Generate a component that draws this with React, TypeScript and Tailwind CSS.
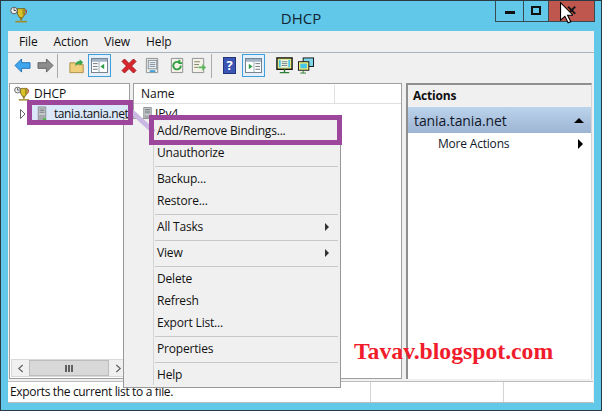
import React from "react";

const font = { fontFamily: '"Open Sans", "Noto Sans", sans-serif' };

function Trophy({ className }: { className?: string }) {
  return (
    <svg viewBox="0 0 16 16" className={className}>
      <path d="M7 2h7v5l-2 3.500H9L7 7z" fill="#d9c22a" stroke="#6d5a10" strokeWidth=".8" />
      <path d="M11.500 2.500H14V7l-2 3z" fill="#a8921c" />
      <path d="M14 3.500h1.500V6L13.500 8" fill="none" stroke="#c0392b" strokeWidth=".9" />
      <circle cx="3.800" cy="3.800" r="3.100" fill="#eeeeee" stroke="#555" strokeWidth=".9" />
      <path d="M3.800 1.800v2h2" fill="none" stroke="#333" strokeWidth=".8" />
      <path d="M9.500 10.500h2V13h-2z" fill="#8a7420" />
      <path d="M5 13.500h11v1.500H5z" fill="#a08a24" />
    </svg>
  );
}

function Server({ className }: { className?: string }) {
  return (
    <svg viewBox="0 0 12 18" className={className}>
      <path d="M1.500.5h9v17h-9z" fill="#c9cdd0" stroke="#7d8286" />
      <path d="M3 3h6M3 5h6M3 7h6" stroke="#6f7478" />
      <rect x="2.500" y="10" width="7" height="7" fill="#a4a8ab" />
      <rect x="7.500" y="14" width="3" height="3" fill="#3dc13d" />
    </svg>
  );
}

function Arrow({ dir, color, edge }: { dir: "l" | "r"; color: string; edge: string }) {
  return (
    <svg viewBox="0 0 18 16" className="w-[17px] h-[15px] shrink-0">
      <path
        d={dir === "l" ? "M1 8 8 1v4h9v6H8v4z" : "M17 8 10 1v4H1v6h9v4z"}
        fill={color}
        stroke={edge}
      />
    </svg>
  );
}

function PaneIcon({ flip }: { flip?: boolean }) {
  return (
    <svg viewBox="0 0 18 16" className="w-[17px] h-[15px]">
      <rect x=".5" y=".5" width="17" height="15" fill="#fff" stroke="#6f7b85" />
      <rect x="1" y="1" width="16" height="3" fill="#9fb4c6" />
      {flip ? (
        <>
          <path d="M4 6v6l4-3z" fill="#2f9e44" />
          <path d="M11 6h5M11 9h5M11 12h5" stroke="#66707a" />
          <path d="M9.500 4v11" stroke="#99aaaa" />
        </>
      ) : (
        <>
          <path d="M2 6h5M2 9h5M2 12h5" stroke="#66707a" />
          <path d="M8.500 4v11" stroke="#99aaaa" />
          <path d="M14 6v6l-4-3z" fill="#2f9e44" />
        </>
      )}
    </svg>
  );
}

function PageIcon({ accent, kind }: { accent: string; kind: "lines" | "refresh" | "export" }) {
  return (
    <svg viewBox="0 0 18 18" className="w-[17px] h-[17px] shrink-0">
      <path d="M2.500 1.500h12v15h-12z" fill="#f4f1e6" stroke="#8b8f93" />
      {kind === "lines" && (
        <>
          <rect x="4.500" y="3.500" width="9" height="9" fill="#eef2f6" stroke="#7f8d9b" />
          <path d="M6 6h6M6 8h6M6 10h6" stroke="#7f8d9b" />
          <rect x="6" y="14" width="6" height="2" fill={accent} />
        </>
      )}
      {kind === "refresh" && (
        <path d="M12.500 9a4 4 0 1 1-1.500-3M11 3v3.500H14" fill="none" stroke={accent} strokeWidth="2" />
      )}
      {kind === "export" && (
        <>
          <path d="M4.500 5h6M4.500 8h5M4.500 11h4" stroke="#7f7f60" />
          <path d="M9 10h4V7.500l4 3.500-4 3.500V12H9z" fill={accent} />
        </>
      )}
    </svg>
  );
}

function Monitor({ className }: { className?: string }) {
  return (
    <svg viewBox="0 0 18 18" className={className}>
      <rect x="1" y="1" width="16" height="12" fill="#f3ee78" stroke="#111" strokeWidth="1.500" />
      <rect x="3" y="3" width="12" height="8" fill="#48c6e8" />
      <rect x="5" y="3" width="8" height="8" fill="#f6f6e0" />
      <path d="M6 5h6M6 7h6M6 9h6" stroke="#6a8792" />
      <path d="M9 13v3M4 16.500h10" stroke="#2e7d32" strokeWidth="1.500" />
    </svg>
  );
}

function Toolbar() {
  const Sep = () => <div className="w-px h-[24px] bg-[#a9a9a9] shrink-0" />;
  const Active = ({ children }: { children: React.ReactNode }) => (
    <div className="w-[23px] h-[23px] border border-[#3f9fdc] bg-[#e4f1fb] flex items-center justify-center shrink-0">
      {children}
    </div>
  );
  return (
    <div className="h-[30px] flex items-center pl-[6px] pb-[5px] bg-[#f0f0f0]">
      <Arrow dir="l" color="#3fa7ee" edge="#1e6fb5" />
      <div className="w-[6px]" />
      <Arrow dir="r" color="#8d8d8d" edge="#5f5f5f" />
      <div className="w-[3px]" />
      <Sep />
      <div className="w-[11px]" />
      <svg viewBox="0 0 18 18" className="w-[16px] h-[17px]">
        <path d="M1 6h6l1 2h8v9H1z" fill="#f0cf7c" stroke="#a78a3d" />
        <path d="M7 10c0-4 2-6 5-6V2l4 3.500L12 9V7c-2 0-4 1-5 3z" fill="#36a447" />
      </svg>
      <div className="w-[3px]" />
      <Active>
        <PaneIcon />
      </Active>
      <div className="w-[9px]" />
      <svg viewBox="0 0 18 18" className="w-[18px] h-[18px]">
        <path d="M2 4.500 4.500 2 9 6.500 13.500 2 16 4.500 11.500 9 16 13.500 13.500 16 9 11.500 4.500 16 2 13.500 6.500 9z" fill="#d8262c" stroke="#a41c20" />
      </svg>
      <div className="w-[6px]" />
      <PageIcon accent="#3f9fdc" kind="lines" />
      <div className="w-[8px]" />
      <PageIcon accent="#2f9e44" kind="refresh" />
      <div className="w-[4px]" />
      <PageIcon accent="#5cb85c" kind="export" />
      <div className="w-[4px]" />
      <Sep />
      <div className="w-[11px]" />
      <div className="w-[13px] h-[17px] bg-[#3a55b4] border border-[#22347c] text-white text-[13px] font-bold flex items-center justify-center leading-none">
        ?
      </div>
      <div className="w-[6px]" />
      <Active>
        <PaneIcon flip />
      </Active>
      <div className="w-[11px]" />
      <Monitor className="w-[17px] h-[17px]" />
      <div className="w-[4px]" />
      <svg viewBox="0 0 18 18" className="w-[18px] h-[17px]">
        <rect x="6" y="1" width="11" height="9" fill="#7fd6ea" stroke="#111" />
        <rect x="1" y="5" width="11" height="9" fill="#f3ee78" stroke="#111" />
        <rect x="3" y="7" width="7" height="5" fill="#48c6e8" />
        <path d="M6 14v3M3 17h6" stroke="#2e7d32" />
      </svg>
    </div>
  );
}

function TreePane() {
  return (
    <div className="w-[121px] bg-white border border-[#a0a0a0] flex flex-col ml-px">
      <div className="h-[20px] flex items-center pl-[4px] gap-[5px] shrink-0">
        <Trophy className="w-[15px] h-[16px] shrink-0" />
        <span className="text-[12px] text-[#101010]">DHCP</span>
      </div>
      <div className="h-[19px] flex items-center pl-[10px] shrink-0">
        <svg viewBox="0 0 6 10" className="w-[6px] h-[10px] shrink-0">
          <path d="M.5.5 5 5 .5 9.500z" fill="#fff" stroke="#666" />
        </svg>
        <div className="ml-[6px] flex-1 min-w-0 h-[19px] bg-[#dbe8f9] flex items-center pl-[5px] gap-[7px]">
          <Server className="w-[10px] h-[18px] shrink-0" />
          <span className="text-[12px] tracking-[-0.42px] text-[#101010] whitespace-nowrap">tania.tania.net</span>
        </div>
      </div>
      <div className="flex-1" />
      <div className="h-[18px] mx-px mb-px flex items-center bg-[#f0f0f0] border border-[#d9d9d9] text-[#606060]">
        <div className="w-[17px] flex justify-center shrink-0">
          <svg viewBox="0 0 8 10" className="w-[7px] h-[9px]">
            <path d="M6.500 1 2 5l4.500 4" fill="none" stroke="#606060" strokeWidth="1.300" />
          </svg>
        </div>
        <div className="w-[80px] h-full bg-[#d8d8d8] border border-[#bcbcbc] flex items-center justify-center gap-px shrink-0">
          <div className="w-[2px] h-[7px] bg-[#606060]" />
          <div className="w-[2px] h-[7px] bg-[#606060]" />
          <div className="w-[2px] h-[7px] bg-[#606060]" />
        </div>
        <div className="flex-1 flex justify-center">
          <svg viewBox="0 0 8 10" className="w-[7px] h-[9px]">
            <path d="M1.500 1 6 5 1.500 9" fill="none" stroke="#606060" strokeWidth="1.300" />
          </svg>
        </div>
      </div>
    </div>
  );
}

function ListPane() {
  return (
    <div className="ml-[3px] w-[269px] bg-white border border-[#a0a0a0] flex flex-col">
      <div className="h-[20px] flex items-center border-b border-[#e0e0e0]">
        <div className="w-[201px] pl-[7px] text-[12px] text-[#101010] border-r border-[#e0e0e0]">Name</div>
      </div>
      <div className="h-[20px] flex items-center pl-[8px] gap-[2px]">
        <Server className="w-[11px] h-[15px]" />
        <span className="text-[12px] text-[#101010]">IPv4</span>
      </div>
    </div>
  );
}

function ActionsPane() {
  return (
    <div className="ml-[4px] w-[186px] bg-white border-l-2 border-t-2 border-[#8f8f8f] border-r border-r-[#d4d4d4] flex flex-col">
      <div className="h-[22px] bg-[#f0f0f0] flex items-center pl-[5px] text-[12px] tracking-[-0.2px] font-bold text-[#101010]">
        Actions
      </div>
      <div className="h-[26px] flex items-center justify-between pl-[6px] pr-[7px] bg-gradient-to-b from-[#bcd3ec] to-[#9db5d4] text-[14px] tracking-[-0.1px] text-[#10182a]">
        <span>tania.tania.net</span>
        <div className="w-0 h-0 border-x-[5px] border-x-transparent border-b-[5px] border-b-black" />
      </div>
      <div className="h-[22px] flex items-center justify-between pl-[30px] pr-[8px] text-[12px] tracking-[-0.2px] text-[#10182a]">
        <span>More Actions</span>
        <div className="w-0 h-0 border-y-[5px] border-y-transparent border-l-[5px] border-l-black" />
      </div>
    </div>
  );
}

function StatusBar() {
  return (
    <div className="h-[22px] mt-[2px] mr-px bg-white border-y border-[#bdbdbd] flex text-[12px] text-[#101010]">
      <div className="w-[363px] pl-[2px] flex items-center border-r border-[#d4d4d4] whitespace-nowrap tracking-[-0.34px]">
        Exports the current list to a file.
      </div>
      <div className="w-[133px] border-r border-[#d4d4d4]" />
      <div className="flex-1" />
    </div>
  );
}

const menuGroups: { label: string; sub?: boolean }[][] = [
  [{ label: "Add/Remove Bindings..." }, { label: "Unauthorize" }],
  [{ label: "Backup..." }, { label: "Restore..." }],
  [{ label: "All Tasks", sub: true }],
  [{ label: "View", sub: true }],
  [{ label: "Delete" }, { label: "Refresh" }, { label: "Export List..." }],
  [{ label: "Properties" }],
  [{ label: "Help" }],
];

function ContextMenu() {
  return (
    <div className="absolute left-[122px] top-[117px] w-[218px] bg-[#f0f0f0] border border-[#979797] p-px">
      <div className="absolute left-[29px] top-0 bottom-[2px] w-px bg-[#d4d4d4]" />
      {menuGroups.map((group, i) => (
        <div key={i}>
          {i > 0 && (
            <div className="h-[4px] flex items-center pl-[30px] pr-[1px]">
              <div className="h-px w-full bg-[#c8c8c8]" />
            </div>
          )}
          {group.map((item) => (
            <div
              key={item.label}
              className="h-[22px] flex items-center justify-between pl-[32px] pr-[10px] text-[12px] tracking-[-0.18px] text-[#101010]"
            >
              <span>{item.label}</span>
              {item.sub && <div className="w-0 h-0 border-y-[4px] border-y-transparent border-l-[4px] border-l-[#333]" />}
            </div>
          ))}
        </div>
      ))}
    </div>
  );
}

export default function App() {
  return (
    <div className="relative w-[602px] h-[411px] overflow-hidden bg-[#62c8ea] border border-[#2b3a42] flex flex-col" style={font}>
      {/* Title bar */}
      <div className="h-[30px] relative flex items-start justify-center">
        <Trophy className="absolute left-[9px] top-[5px] w-[17px] h-[18px]" />
        <span className="text-[15px] text-[#0f2430] mt-[6px]">DHCP</span>
        <div className="absolute right-[6px] top-[-1px] h-[22px] flex border border-[#3a4a52] border-t-0">
          <div className="w-[28px] flex items-center justify-center border-r border-[#3a4a52]">
            <div className="w-[10px] h-[3px] bg-[#111] mt-[4px]" />
          </div>
          <div className="w-[25px] flex items-center justify-center border-r border-[#3a4a52]">
            <div className="w-[10px] h-[9px] border-2 border-[#111]" />
          </div>
          <div className="w-[45px] bg-[#c0574f] flex items-center justify-center text-[13px] font-bold text-[#111]">✕</div>
        </div>
      </div>

      {/* Client area */}
      <div className="mx-[7px] h-[372px] bg-[#f0f0f0] flex flex-col">
        <div className="h-[22px] flex items-center gap-[16px] pl-[11px] text-[12px] tracking-[-0.1px] text-[#101010] border-b border-[#a9b4bc]">
          <span>File</span>
          <span>Action</span>
          <span>View</span>
          <span>Help</span>
        </div>
        <Toolbar />
        <div className="flex-1 flex min-h-0">
          <TreePane />
          <ListPane />
          <ActionsPane />
        </div>
        <StatusBar />
      </div>

      {/* Overlays */}
      <ContextMenu />
      <svg className="absolute left-0 top-0 w-[602px] h-[411px] pointer-events-none" viewBox="0 0 602 411">
        <path d="M130 110 153 131" stroke="#c9b8e2" strokeWidth="5" />
      </svg>
      <div className="absolute left-[26px] top-[99px] w-[106px] h-[25px] border-[5px] border-[#9c479c]" />
      <div className="absolute left-[148px] top-[114px] w-[193px] h-[30px] border-[5px] border-[#9c479c]" />
      <div
        className="absolute left-[353px] top-[333px] text-[23.700px] font-bold text-[#f01c2c] whitespace-nowrap"
        style={{ fontFamily: '"Liberation Serif", serif' }}
      >
        Tavav.blogspot.com
      </div>
      <svg viewBox="0 0 12 20" className="absolute left-[559px] top-[1px] w-[13px] h-[22px]">
        <path d="M.5.5v16l4-3.500 3 6 2.500-1-3-6h5z" fill="#fff" stroke="#000" />
      </svg>
    </div>
  );
}
